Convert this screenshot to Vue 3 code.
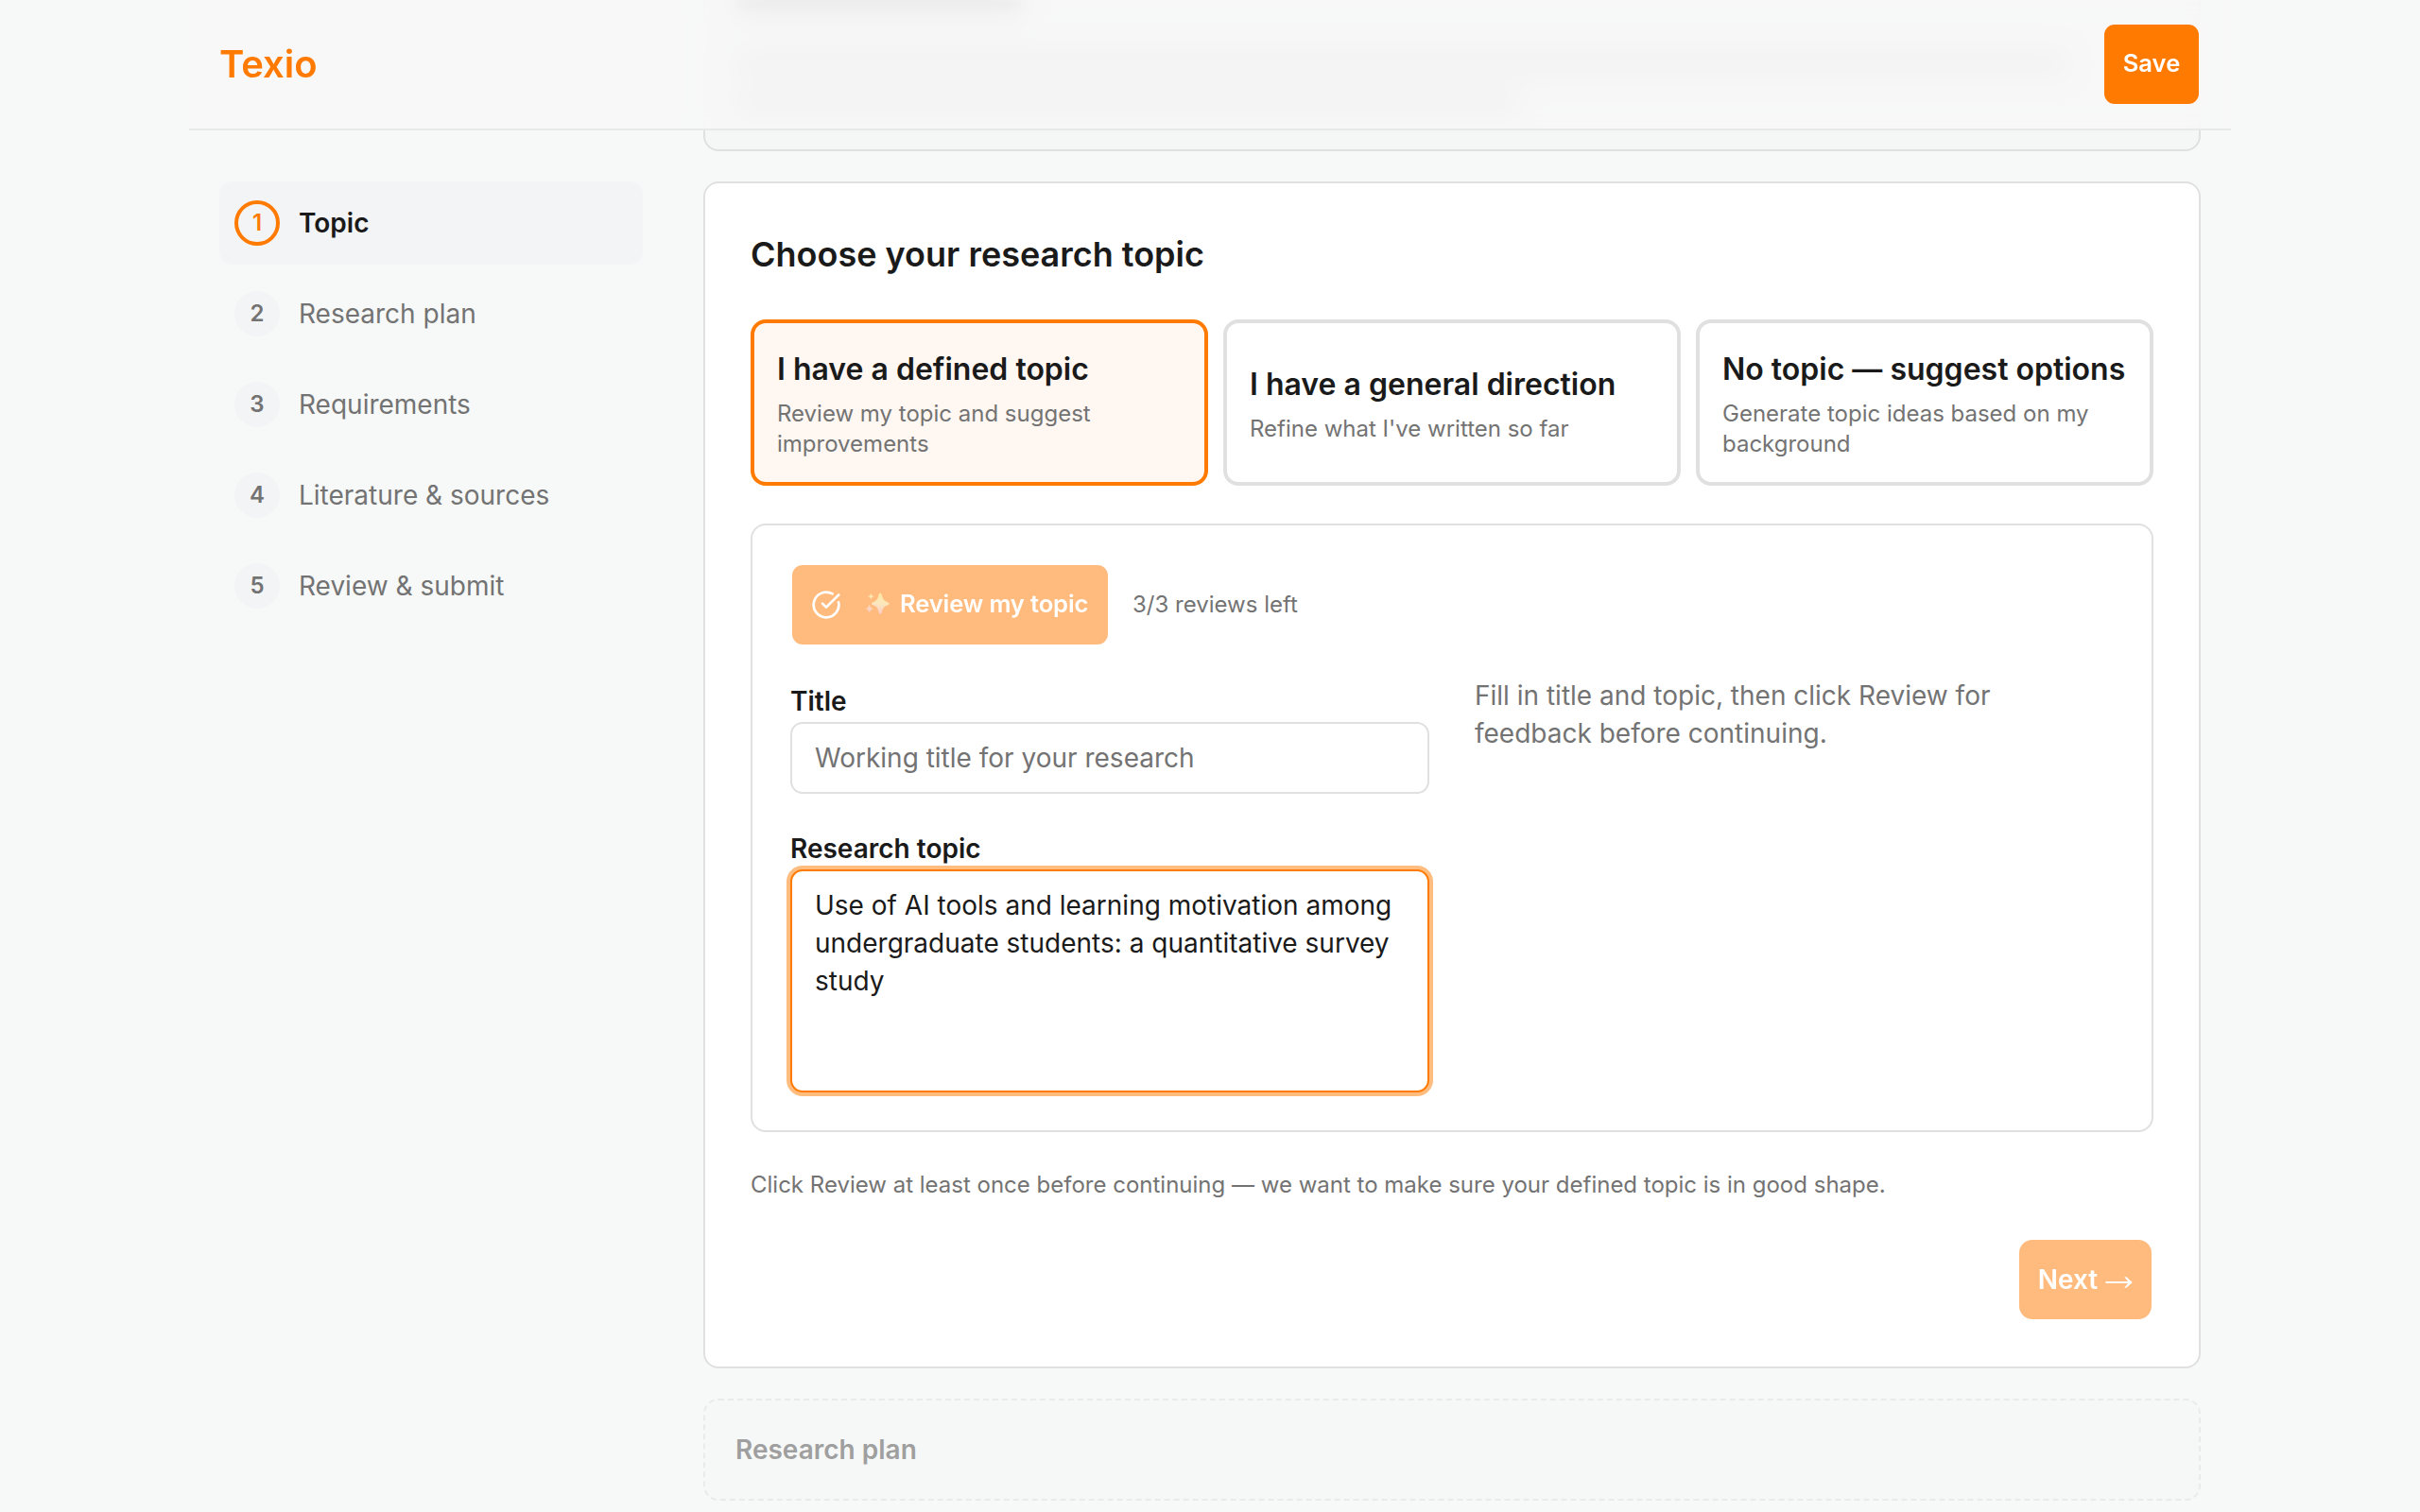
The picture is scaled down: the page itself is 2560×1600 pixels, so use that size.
<script setup>
import { ref } from 'vue'

const steps = ['Topic', 'Research plan', 'Requirements', 'Literature & sources', 'Review & submit']
const activeStep = ref(0)

const options = [
  { title: 'I have a defined topic', text: 'Review my topic and suggest improvements' },
  { title: 'I have a general direction', text: "Refine what I've written so far" },
  { title: 'No topic — suggest options', text: 'Generate topic ideas based on my background' },
]
const selected = ref(0)

const title = ref('')
const topic = ref('Use of AI tools and learning motivation among undergraduate students: a quantitative survey study')
</script>

<template>
  <div class="page">
    <header class="topbar">
      <span class="brand">Texio</span>
      <button class="btn save" type="button">Save</button>
    </header>

    <div class="layout">
      <nav class="steps">
        <button
          v-for="(step, i) in steps"
          :key="step"
          type="button"
          class="step"
          :class="{ active: i === activeStep }"
          @click="activeStep = i"
        >
          <span class="num">{{ i + 1 }}</span>
          <span class="name">{{ step }}</span>
        </button>
      </nav>

      <main class="column">
        <section class="intro">
          <div class="smudge heading"></div>
          <div class="smudge line"></div>
          <div class="smudge line short"></div>
        </section>

        <section class="card">
          <h2>Choose your research topic</h2>

          <div class="options">
            <button
              v-for="(o, i) in options"
              :key="o.title"
              type="button"
              class="option"
              :class="{ selected: i === selected }"
              @click="selected = i"
            >
              <span class="option-title">{{ o.title }}</span>
              <span class="option-text">{{ o.text }}</span>
            </button>
          </div>

          <div class="panel">
            <div class="review-row">
              <button class="btn review" type="button" disabled>
                <svg class="check" viewBox="0 0 24 24" fill="none" stroke="currentColor" stroke-width="2" stroke-linecap="round" stroke-linejoin="round">
                  <path d="M21.801 10A10 10 0 1 1 17 3.335" />
                  <path d="m9 11 3 3L22 4" />
                </svg>
                <svg class="sparkles" viewBox="0 0 26 26">
                  <defs>
                    <linearGradient id="spark" gradientUnits="userSpaceOnUse" x1="17" y1="1" x2="12" y2="24">
                      <stop offset="0" stop-color="#fbd04a" />
                      <stop offset="0.5" stop-color="#fad07c" />
                      <stop offset="1" stop-color="#f7948c" />
                    </linearGradient>
                  </defs>
                  <g fill="url(#spark)">
                    <path d="M16.200 1.500C17.200 1.500 17.600 2.500 18 4C19 8 20 9.500 23.500 11C25 11.600 25.600 12 25.600 12.800C25.600 13.600 25 14 23.500 14.600C20 16 19 17.500 18 21.500C17.600 23 17.200 24 16.200 24C15.200 24 14.800 23 14.400 21.500C13.400 17.500 12.400 16 9 14.600C7.500 14 6.900 13.600 6.900 12.800C6.900 12 7.500 11.600 9 11C12.400 9.500 13.400 8 14.400 4C14.800 2.500 15.200 1.500 16.200 1.500Z" />
                    <path d="M6.300 1.400C6.900 3.800 7.300 4.300 9.800 5C7.300 5.700 6.900 6.200 6.300 8.600C5.700 6.200 5.300 5.700 2.800 5C5.300 4.300 5.700 3.800 6.300 1.400Z" />
                    <path d="M4.700 13.300C5.500 16.700 6.100 17.400 9.500 18.300C6.100 19.200 5.500 19.900 4.700 23.300C3.900 19.900 3.300 19.200 -0.100 18.300C3.300 17.400 3.900 16.700 4.700 13.300Z" />
                  </g>
                </svg>
                <span class="small-label">Review my topic</span>
              </button>
              <span class="muted-sm">3/3 reviews left</span>
            </div>

            <div class="fields">
              <div class="form">
                <div class="field">
                  <label for="title">Title</label>
                  <input id="title" v-model="title" type="text" placeholder="Working title for your research" />
                </div>
                <div class="field">
                  <label for="topic">Research topic</label>
                  <textarea id="topic" v-model="topic" class="focused" spellcheck="false"></textarea>
                </div>
              </div>
              <p class="hint">Fill in title and topic, then click Review for feedback before continuing.</p>
            </div>
          </div>

          <p class="muted-sm note">
            Click Review at least once before continuing — we want to make sure your defined topic is in good shape.
          </p>

          <div class="actions">
            <button class="btn next" type="button" disabled>
              <span>Next</span>
              <svg class="arrow" viewBox="0 0 29 12">
                <path d="M0.500 6H26" fill="none" stroke="currentColor" stroke-width="2" />
                <path d="M20.300 0.300H22.400L28.800 6L22.400 11.700H20.300L24.800 6Z" fill="currentColor" />
              </svg>
            </button>
          </div>
        </section>

        <section class="locked">Research plan</section>
      </main>
    </div>
  </div>
</template>

<style>
body {
  margin: 0;
  background: #f7f9f8;
}
</style>

<style scoped>
.page {
  position: relative;
  box-sizing: border-box;
  width: 2560px;
  height: 1600px;
  overflow: hidden;
  background: #f7f9f8;
  color: #1a1a1a;
  font-family: Inter, 'Liberation Sans', sans-serif;
  font-size: 28px;
  line-height: 40px;
}
.page *,
.page *::before {
  box-sizing: border-box;
}
button,
input,
textarea {
  margin: 0;
  font: inherit;
  color: inherit;
}

/* The bar floats over the scrolled content */
.topbar {
  position: absolute;
  z-index: 2;
  top: 0;
  left: 200px;
  width: 2160px;
  height: 138px;
  padding: 24px 32px;
  display: flex;
  align-items: center;
  justify-content: space-between;
  background: rgba(248, 248, 248, 0.8);
  backdrop-filter: blur(14px);
  border-bottom: 2px solid #e8e8e8;
}
.brand {
  color: #ff7a00;
  font-size: 40px;
  font-weight: 600;
}
.btn {
  height: 88px;
  display: inline-flex;
  align-items: center;
  justify-content: center;
  border: 2px solid transparent;
  border-radius: 16px;
  background: #ff7a00;
  background-clip: padding-box;
  color: #fff;
  font-weight: 600;
  white-space: nowrap;
}
.btn:disabled {
  opacity: 0.5;
}
.save,
.review {
  border-radius: 13px;
  font-size: 25.6px;
  letter-spacing: -0.15px;
}
.save {
  width: 104px;
  padding: 0 0 2px;
  letter-spacing: 0;
}

.layout {
  display: flex;
  gap: 64px;
  width: 2096px;
  margin: 0 auto 0 232px;
}
.steps {
  width: 448px;
  padding-top: 192px;
  display: flex;
  flex-direction: column;
  gap: 8px;
}
.step {
  height: 88px;
  padding: 0 16px;
  display: flex;
  align-items: center;
  gap: 20px;
  border: 0;
  border-radius: 14px;
  background: transparent;
  color: #737373;
  text-align: left;
}
.num {
  width: 48px;
  height: 48px;
  display: flex;
  align-items: center;
  justify-content: center;
  border-radius: 50%;
  background: #f3f4f6;
  font-size: 24px;
  font-weight: 600;
}
.step.active {
  background: #f3f4f6;
  color: #1a1a1a;
  font-weight: 600;
}
.step.active .num {
  border: 4px solid #ff7a00;
  background: transparent;
  color: #ff7a00;
}

.column {
  width: 1584px;
  display: flex;
  flex-direction: column;
  gap: 32px;
}
.intro {
  height: 160px;
  border: 2px solid #dfe0e0;
  border-top: 0;
  border-radius: 0 0 16px 16px;
  background: #f5f7f6;
}
.smudge {
  margin-left: 32px;
  border-radius: 8px;
  background: rgba(90, 80, 80, 0.24);
  filter: blur(7px);
}
.heading {
  width: 304px;
  height: 12px;
  background: rgba(60, 50, 50, 0.5);
}
.line {
  width: 1410px;
  height: 18px;
  margin-top: 46px;
}
.line.short {
  width: 830px;
  margin-top: 22px;
}

.card {
  padding: 48px;
  border: 2px solid #e0e0e0;
  border-radius: 16px;
  background: #fff;
}
h2 {
  margin: 0 0 42px;
  font-size: 36px;
  line-height: 54px;
  font-weight: 600;
}
.options {
  display: grid;
  grid-template-columns: repeat(3, 1fr);
  gap: 16px;
}
.option {
  height: 176px;
  padding: 0 24px;
  display: flex;
  flex-direction: column;
  justify-content: center;
  gap: 8px;
  border: 4px solid #e0e0e0;
  border-radius: 16px;
  background: #fff;
  text-align: left;
}
.option.selected {
  border-color: #ff7a00;
  background: #fff7f2;
}
.option-title {
  padding-top: 2px;
  font-size: 32px;
  line-height: 46px;
  font-weight: 600;
  white-space: nowrap;
}
.option-text {
  font-size: 24px;
  line-height: 32px;
  color: #737373;
}
.panel {
  margin-top: 40px;
  padding: 40px;
  border: 2px solid #e0e0e0;
  border-radius: 16px;
}
.review-row {
  display: flex;
  align-items: center;
  gap: 24px;
}
.review {
  width: 338px;
  padding: 0 20px;
  justify-content: flex-start;
}
.check {
  width: 32px;
  height: 32px;
  flex: none;
}
.sparkles {
  width: 26px;
  height: 26px;
  margin: 0 11px 2px 25px;
  flex: none;
}
.small-label {
  padding-bottom: 2px;
}
.muted-sm {
  color: #737373;
  font-size: 24px;
  line-height: 32px;
}
.fields {
  display: grid;
  grid-template-columns: 1fr 1fr;
  gap: 48px;
  margin-top: 32px;
}
.form {
  display: flex;
  flex-direction: column;
  gap: 32px;
}
.field {
  display: flex;
  flex-direction: column;
}
label {
  padding: 6px 0 2px;
  font-weight: 600;
}
input,
textarea {
  width: 100%;
  padding: 16px 24px;
  border: 2px solid #e0e0e0;
  border-radius: 13px;
  outline: none;
  background: #fff;
}
input {
  height: 76px;
}
input::placeholder {
  color: #737373;
  opacity: 1;
}
textarea {
  display: block;
  height: 236px;
  resize: none;
}
.focused {
  border-color: #ff7a00;
  box-shadow: 0 0 0 4px rgba(255, 122, 0, 0.5);
}
.hint {
  margin: 0;
  color: #737373;
}
.note {
  margin: 40px 0;
}
.actions {
  display: flex;
  justify-content: flex-end;
}
.next {
  width: 144px;
  padding: 0;
}
.arrow {
  width: 29px;
  height: 12px;
  margin: 5px 0 0 8px;
  flex: none;
}
.locked {
  height: 108px;
  padding: 32px;
  border: 2px dashed #e9ebea;
  border-radius: 16px;
  background: #f6f8f7;
  color: #9f9f9f;
  font-weight: 600;
}
</style>
